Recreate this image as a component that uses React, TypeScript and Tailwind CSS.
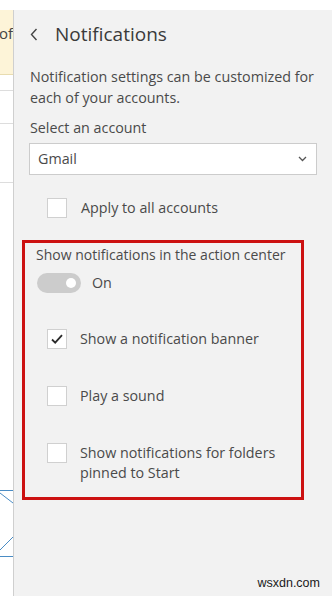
import React from 'react';

// --- Small drawn pieces ---

const BackChevron: React.FC = () => (
    <svg width="8" height="13" viewBox="0 0 8 13" className="shrink-0">
        <path d="M6.5 1 L1.5 6.5 L6.5 12" fill="none" stroke="#444" strokeWidth="1.4" />
    </svg>
);

const DropChevron: React.FC = () => (
    <svg width="9" height="6" viewBox="0 0 9 6">
        <path d="M1 1 L4.5 4.5 L8 1" fill="none" stroke="#555" strokeWidth="1.3" />
    </svg>
);

interface CheckProps {
    checked?: boolean;
}

const CheckBox: React.FC<CheckProps> = ({ checked }) => (
    <div className="w-[20px] h-[20px] shrink-0 bg-white border border-[#d0d0d0] flex items-center justify-center">
        {checked && (
            <svg width="14" height="12" viewBox="0 0 14 12">
                <path d="M2 6.5 L5.2 9.6 L12 2.2" fill="none" stroke="#2b2b2b" strokeWidth="1.8" />
            </svg>
        )}
    </div>
);

interface OptionProps {
    checked?: boolean;
    children: React.ReactNode;
}

const Option: React.FC<OptionProps> = ({ checked, children }) => (
    <div className="flex items-start gap-[13px] ml-[11px]">
        <CheckBox checked={checked} />
        <span className="leading-[20px]">{children}</span>
    </div>
);

// left edge of the mail list peeking out behind the panel
const ListEdge: React.FC = () => (
    <div className="w-[14px] shrink-0 bg-white border-r border-[#cfcfcf] flex flex-col overflow-hidden">
        <div className="h-[65px] shrink-0 bg-[#fdf4d8] border-b border-[#e8dcb0] flex items-center justify-end pb-[17px] overflow-hidden">
            <span className="text-[15px] text-[#444] whitespace-nowrap">of</span>
        </div>
        <div className="h-px shrink-0 mt-[15px] bg-[#dddddd]" />
        <div className="h-px shrink-0 mt-[32px] bg-[#dddddd]" />
        <div className="h-px shrink-0 mt-[58px] bg-[#dddddd]" />
        <svg width="13" height="67" viewBox="0 0 13 67" className="shrink-0 mt-[307px]">
            <g fill="none" stroke="#4a8cc4" strokeWidth="1">
                <path d="M0 0.5 H13" />
                <path d="M0 66.5 H13" />
                <path d="M0 3 L13 13" />
                <path d="M0 60 L13 47" />
            </g>
        </svg>
    </div>
);

const App: React.FC = () => {
    return (
        <div
            className="w-[332px] h-[596px] bg-white flex flex-col overflow-hidden text-[#4a4a4a]"
            style={{ fontFamily: '"Open Sans", "Noto Sans", sans-serif' }}
        >
            <div className="h-[10px] shrink-0" />
            <div className="flex flex-1 min-h-0">
                <ListEdge />

                {/* Settings pane */}
                <div className="flex-1 bg-[#f2f2f2] flex flex-col">
                    <div className="h-[48px] shrink-0 flex items-center pl-[16px]">
                        <BackChevron />
                        <h1 className="ml-[17px] text-[19px] text-[#3a3a3a]">Notifications</h1>
                    </div>

                    <p className="mt-[8px] pl-[16px] pr-[8px] text-[14.3px] leading-[21px]">
                        Notification settings can be customized for each of your accounts.
                    </p>

                    <div className="mt-[9px] pl-[16px] text-[14.3px] leading-[21px]">Select an account</div>

                    <div className="mt-[5px] ml-[15px] w-[288px] h-[32px] bg-white border border-[#cccccc] flex items-center justify-between pl-[8px] pr-[9px] text-[14.3px]">
                        <span>Gmail</span>
                        <DropChevron />
                    </div>

                    <div className="mt-[22px] ml-[33px] flex items-center gap-[14px] text-[14.3px]">
                        <CheckBox />
                        <span>Apply to all accounts</span>
                    </div>

                    {/* Highlighted group */}
                    <div className="mt-[22px] ml-[8px] w-[282px] border-[3px] border-[#cc1111] pl-[11px] pt-[2px] pb-[14px] text-[14.3px]">
                        <div className="leading-[20px] text-[14px]">Show notifications in the action center</div>

                        <div className="mt-[8px] flex items-center gap-[11px]">
                            <div className="ml-[1px] w-[44px] h-[20px] rounded-full bg-[#cccccc] flex items-center justify-end pr-[5px]">
                                <div className="w-[10px] h-[10px] rounded-full bg-white" />
                            </div>
                            <span className="leading-[20px]">On</span>
                        </div>

                        <div className="mt-[36px] flex flex-col gap-[37px]">
                            <Option checked>Show a notification banner</Option>
                            <Option>Play a sound</Option>
                            <Option>
                                Show notifications for folders
                                <br />
                                pinned to Start
                            </Option>
                        </div>
                    </div>

                    <div className="mt-auto flex justify-end pr-[12px] pb-[3px]">
                        <span className="text-[12.5px] text-[#1a1a1a]" style={{ fontFamily: '"Liberation Sans", sans-serif' }}>
                            wsxdn.com
                        </span>
                    </div>
                </div>
            </div>
        </div>
    );
};

export default App;
